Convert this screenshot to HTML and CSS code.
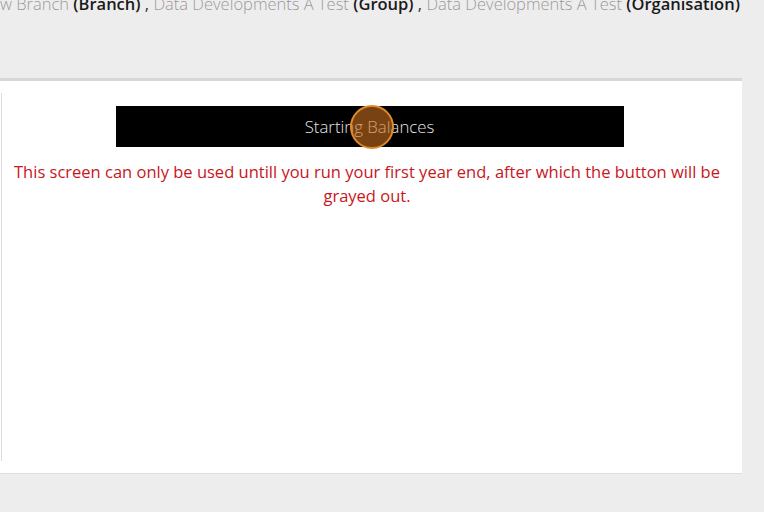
FILE: index.html
```html
<!DOCTYPE html>
<html lang="en">
<head>
  <meta charset="UTF-8">
  <title>Starting Balances</title>
  <link rel="stylesheet" href="styles.css">
</head>
<body>
  <div class="crumbs">
    <span class="name">w Branch</span> <b>(Branch)</b> , <span class="name">Data Developments A Test</span> <b>(Group)</b> , <span class="name">Data Developments A Test</span> <b>(Organisation)</b>
  </div>

  <div class="panel">
    <div class="panel-body">
      <button class="start-btn">Starting Balances<span class="click-dot"></span></button>
      <p class="warning">This screen can only be used untill you run your first year end, after which the button will be grayed out.</p>
    </div>
  </div>
</body>
</html>
```

FILE: styles.css
```css
body {
  margin: 0;
  background: #eeedee;
  font-family: 'Open Sans', sans-serif;
  height: 512px;
  overflow: hidden;
}

.crumbs {
  width: 738px;
  text-align: right;
  font-size: 16.5px;
  line-height: 20px;
  margin-top: -6px;
  color: #333;
  white-space: nowrap;
}

.crumbs .name {
  color: #9a9a9a;
  font-weight: 300;
}

.crumbs b {
  font-weight: 600;
  color: #1a1a1a;
}

.panel {
  margin-top: 64px;
  width: 742px;
  height: 396px;
  background: #fff;
  border-top: 3px solid #d7d7da;
  border-bottom: 1px solid #dcdcdc;
  padding: 12px 0;
  box-sizing: border-box;
}

.panel-body {
  margin-left: 1px;
  border-left: 1px solid #dddddd;
  height: 100%;
  display: flex;
  flex-direction: column;
  align-items: center;
}

.start-btn {
  position: relative;
  width: 508px;
  height: 41px;
  margin-top: 13px;
  margin-left: -5px;
  background: #000;
  color: #e4e4e4;
  border: none;
  font-family: 'Open Sans', sans-serif;
  font-size: 16.8px;
  font-weight: 300;
  padding: 0;
}

.click-dot {
  position: absolute;
  left: 234px;
  top: -1px;
  width: 44px;
  height: 44px;
  border-radius: 50%;
  box-sizing: border-box;
  border: 2px solid #e08a2c;
  background: rgba(200, 110, 30, 0.6);
}

.warning {
  margin: 13px 10px 0 0;
  padding: 0 6px;
  color: #c8161c;
  font-size: 16.5px;
  line-height: 24px;
  text-align: center;
}
```
